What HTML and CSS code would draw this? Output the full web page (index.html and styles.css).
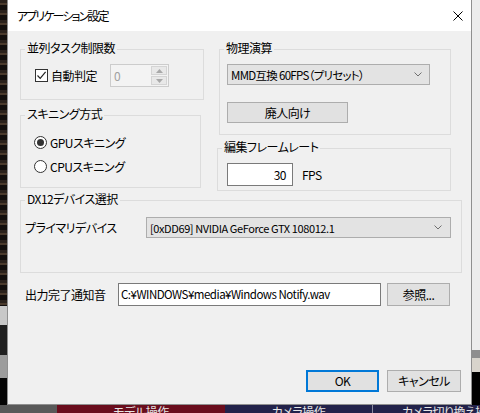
FILE: index.html
```html
<!DOCTYPE html>
<html lang="ja">
<head>
<meta charset="utf-8">
<title>アプリケーション設定</title>
<link rel="stylesheet" href="styles.css">
</head>
<body>
<div class="app">
  <div class="lstrip"></div>
  <div class="dialog">
    <div class="titlebar">
      <span class="title">アプリケーション設定</span>
      <svg class="close" width="10" height="10" viewBox="0 0 10 10"><path d="M0.5 0.5 L9.5 9.5 M9.5 0.5 L0.5 9.5" stroke="#000" stroke-width="1" fill="none"/></svg>
    </div>
    <div class="content">
      <div class="row1">
        <div class="col-left">
          <section class="group g-task">
            <span class="group-label">並列タスク制限数</span>
            <div class="check">
              <span class="checkbox"><svg width="11" height="11" viewBox="0 0 11 11"><path d="M1.5 5.5 L4.2 8.3 L9.6 1.8" stroke="#222" stroke-width="1.2" fill="none"/></svg></span>
              <span>自動判定</span>
            </div>
            <div class="spin">
              <span class="spin-val">0</span>
              <div class="spin-btns">
                <span class="spin-btn"><svg width="7" height="4" viewBox="0 0 7 4"><path d="M0 4 L3.5 0 L7 4 Z" fill="#a8a8a8"/></svg></span>
                <span class="spin-btn"><svg width="7" height="4" viewBox="0 0 7 4"><path d="M0 0 L3.5 4 L7 0 Z" fill="#a8a8a8"/></svg></span>
              </div>
            </div>
          </section>
          <section class="group g-skin">
            <span class="group-label">スキニング方式</span>
            <div class="radio-row"><span class="radio checked"><span class="dot"></span></span><span>GPUスキニング</span></div>
            <div class="radio-row"><span class="radio"></span><span>CPUスキニング</span></div>
          </section>
        </div>
        <div class="col-right">
          <section class="group g-phys">
            <span class="group-label">物理演算</span>
            <div class="combo c-phys"><span class="combo-text">MMD互換 60FPS（プリセット）</span><svg width="8" height="5" viewBox="0 0 8 5"><path d="M0.5 0.5 L4 4 L7.5 0.5" stroke="#707070" fill="none"/></svg></div>
            <button class="btn b-pro">廃人向け</button>
          </section>
          <section class="group g-fps">
            <span class="group-label">編集フレームレート</span>
            <div class="edit fps-edit">30</div>
            <span class="fps-unit">FPS</span>
          </section>
        </div>
      </div>
      <section class="group g-dx">
        <span class="group-label">DX12デバイス選択</span>
        <span class="dx-label">プライマリデバイス</span>
        <div class="combo c-dx"><span class="combo-text">[0xDD69] NVIDIA GeForce GTX 108012.1</span><svg width="8" height="5" viewBox="0 0 8 5"><path d="M0.5 0.5 L4 4 L7.5 0.5" stroke="#707070" fill="none"/></svg></div>
      </section>
      <div class="notify-row">
        <span class="notify-label">出力完了通知音</span>
        <div class="edit path-edit">C:¥WINDOWS¥media¥Windows Notify.wav</div>
        <button class="btn b-browse">参照...</button>
      </div>
      <div class="actions">
        <button class="btn b-ok">OK</button>
        <button class="btn b-cancel">キャンセル</button>
      </div>
    </div>
  </div>
  <div class="rstrip"></div>
  <div class="bottombar">
    <div class="seg seg-gray"></div>
    <div class="seg seg-red">モデル操作</div>
    <div class="seg seg-navy1">カメラ操作</div>
    <div class="seg seg-navy2">カメラ切り換え操作</div>
  </div>
</div>
</body>
</html>
```

FILE: styles.css
```css
html, body {
  margin: 0;
  padding: 0;
}
body {
  width: 480px;
  height: 413px;
  overflow: hidden;
  background: #1a1614;
  font-family: "Noto Sans CJK JP", sans-serif;
  font-size: 12px;
  font-weight: 400;
  letter-spacing: -0.5px;
  font-feature-settings: "palt";
  color: #000;
}
.app {
  display: grid;
  grid-template-columns: 7px 465px 8px;
  grid-template-rows: 405px 8px;
  width: 480px;
  height: 413px;
}
.lstrip {
  background:
    linear-gradient(to bottom, transparent 306px, #c8c8c8 306px, #c8c8c8 325px, #202020 325px, #202020 355px, #9c9c9c 355px, #9c9c9c 378px, #050505 378px),
    repeating-linear-gradient(to bottom, #2a211b 0, #2a211b 3px, #4a3a2c 3px, #4a3a2c 5px, #120e0c 5px, #120e0c 10px);
}
.rstrip {
  background: linear-gradient(to bottom, #ececec 0, #ececec 350px, #8e8e8e 350px, #8e8e8e 358px, #d8d4cc 358px, #d8d4cc 372px, #000 372px);
}
.bottombar {
  grid-column: 1 / 4;
  display: flex;
  overflow: hidden;
  font-size: 12px;
  line-height: 12px;
  color: #e6e6e6;
}
.seg {
  height: 8px;
  overflow: hidden;
  padding-top: 1px;
  box-sizing: border-box;
  white-space: nowrap;
}
.seg-gray { width: 57px; background: #595959; }
.seg-red { width: 168px; background: #6a0d1d; text-align: center; }
.seg-navy1 { width: 148px; background: #22224a; text-align: center; border-right: 1px solid #8a8aa0; }
.seg-navy2 { flex: 1; background: #22224a; padding-left: 29px; }

.dialog {
  background: #f0f0f0;
  border: 1px solid #8f8f8f;
  border-top: 0;
  box-sizing: border-box;
  display: flex;
  flex-direction: column;
}
.titlebar {
  height: 31px;
  flex: none;
  background: #fff;
  display: flex;
  align-items: center;
  justify-content: space-between;
  padding: 0 8px 0 9px;
}
.title {
  line-height: 16px;
  letter-spacing: -1.9px;
}
.content {
  flex: 1;
  display: flex;
  flex-direction: column;
  padding: 18px 10px 12px 12px;
}

/* group boxes */
.group {
  position: relative;
  box-sizing: border-box;
  border: 1px solid #dcdcdc;
  display: flex;
}
.group-label {
  position: absolute;
  top: -10px;
  left: 4px;
  padding: 0 2px;
  line-height: 16px;
  background: #f0f0f0;
  white-space: nowrap;
}
.row1 {
  display: flex;
  align-items: flex-start;
}
.col-left {
  width: 184px;
  display: flex;
  flex-direction: column;
}
.g-task {
  width: 184px;
  height: 51px;
  padding: 14px 0 0 14px;
  align-items: flex-start;
}
.check {
  display: flex;
  align-items: center;
  width: 75px;
  height: 23px;
  line-height: 16px;
}
.checkbox {
  width: 13px;
  height: 13px;
  box-sizing: border-box;
  border: 1px solid #333;
  background: #fff;
  margin-right: 3px;
  display: flex;
  align-items: center;
  justify-content: center;
}
.spin {
  width: 59px;
  height: 23px;
  box-sizing: border-box;
  border: 1px solid #cccccc;
  background: #f3f3f3;
  display: flex;
}
.spin-val {
  flex: 1;
  padding-left: 3px;
  line-height: 21px;
  color: #a0a0a0;
}
.spin-btns {
  width: 16px;
  display: flex;
  flex-direction: column;
  gap: 1px;
  padding: 1px 1px 1px 0;
}
.spin-btn {
  flex: 1;
  background: #e8e8e8;
  border: 1px solid #d4d4d4;
  display: flex;
  align-items: center;
  justify-content: center;
}
.g-skin {
  margin-top: 15px;
  width: 181px;
  height: 73px;
  padding: 16px 0 0 13px;
  flex-direction: column;
  gap: 4px;
}
.radio-row {
  display: flex;
  align-items: center;
  height: 20px;
}
.radio {
  width: 13px;
  height: 13px;
  box-sizing: border-box;
  border: 1px solid #333;
  border-radius: 50%;
  background: #fff;
  margin-right: 3px;
  display: flex;
  align-items: center;
  justify-content: center;
}
.dot {
  width: 7px;
  height: 7px;
  border-radius: 50%;
  background: #333;
}
.col-right {
  margin-left: 13px;
  width: 234px;
  display: flex;
  flex-direction: column;
}
.g-phys {
  margin-left: 2px;
  width: 232px;
  height: 86px;
  padding: 14px 0 0 7px;
  flex-direction: column;
  align-items: flex-start;
}
.combo {
  height: 21px;
  box-sizing: border-box;
  background: #e3e3e3;
  border: 1px solid #adadad;
  display: flex;
  align-items: center;
  justify-content: space-between;
  padding: 0 7px 0 3px;
  line-height: 16px;
  white-space: nowrap;
}
.combo-text {
  font-size: 11.5px;
  letter-spacing: -0.7px;
}
.c-dx .combo-text {
  font-size: 11px;
  letter-spacing: -0.4px;
}
.c-phys {
  width: 203px;
}
.btn {
  font: inherit;
  letter-spacing: inherit;
  font-feature-settings: "palt";
  color: #000;
  background: #e1e1e1;
  border: 1px solid #adadad;
  box-sizing: border-box;
  padding: 0;
  line-height: 16px;
}
.b-pro {
  margin-top: 17px;
  width: 121px;
  height: 21px;
}
.g-fps {
  margin-top: 13px;
  width: 234px;
  height: 43px;
  padding: 14px 0 0 9px;
  align-items: flex-start;
}
.edit {
  height: 23px;
  box-sizing: border-box;
  background: #fff;
  border: 1px solid #7a7a7a;
  line-height: 21px;
  white-space: nowrap;
  overflow: hidden;
}
.fps-edit {
  width: 66px;
  text-align: right;
  padding-right: 6px;
}
.fps-unit {
  margin-left: 9px;
  line-height: 23px;
}
.g-dx {
  margin-top: 9px;
  width: 442px;
  height: 73px;
  padding: 16px 0 0 4px;
  align-items: flex-start;
}
.dx-label {
  width: 121px;
  line-height: 21px;
}
.c-dx {
  width: 305px;
  padding-right: 8px;
}
.notify-row {
  margin-top: 10px;
  display: flex;
  align-items: center;
}
.notify-label {
  width: 93px;
  padding-left: 5px;
  line-height: 16px;
}
.path-edit {
  width: 263px;
  padding-left: 2px;
  font-size: 11.5px;
}
.b-browse {
  margin-left: 6px;
  width: 63px;
  height: 23px;
}
.actions {
  margin-top: auto;
  display: flex;
  justify-content: flex-end;
  gap: 8px;
}
.b-ok {
  width: 73px;
  height: 22px;
  border: 2px solid #0078d7;
}
.b-cancel {
  width: 74px;
  height: 22px;
}
```
